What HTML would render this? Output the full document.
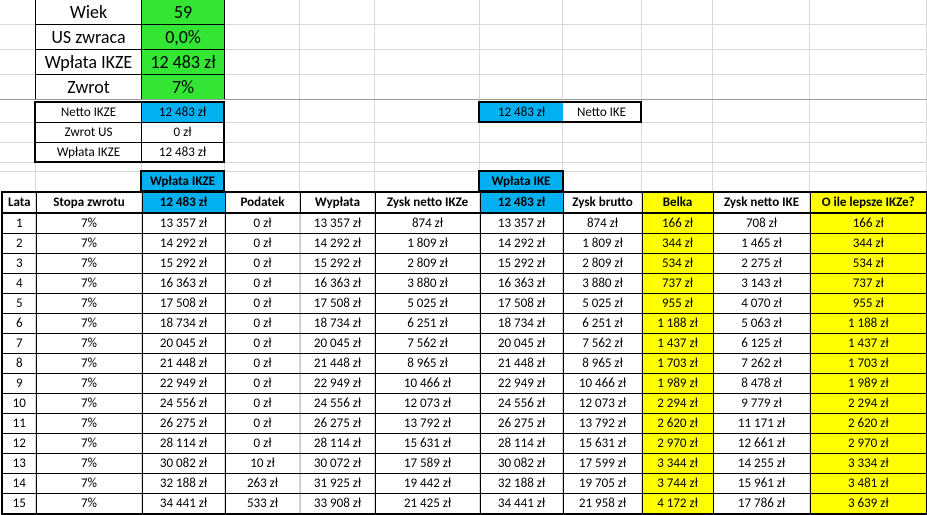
<!DOCTYPE html>
<html><head><meta charset="utf-8"><style>
*{margin:0;padding:0}
body{width:927px;height:514px;background:#fff;position:relative;overflow:hidden;font-family:Calibri,"Liberation Sans",sans-serif;color:#000}
.v{position:absolute;top:0;height:514px;width:1px;background:#d9d9d9}
.h{position:absolute;left:0;width:927px;height:1px;background:#d9d9d9}
.c{position:absolute;display:flex;align-items:center;justify-content:center;box-sizing:border-box;white-space:nowrap}
.big{font-size:18px}
.sm{font-size:13px}
table{position:absolute;left:1px;top:191px;border-collapse:collapse;table-layout:fixed;width:925px;font-size:13px;border:2px solid #000}
td{border:1px solid #000;height:19px;padding:0;text-align:center;white-space:nowrap;overflow:hidden;line-height:19px}
tr.hd td{font-weight:bold;border-bottom:2px solid #000}
td.b{background:#00b0f0}td.y{background:#ffff00}
td.g{border-left-color:#c8c8c8;border-right-color:#c8c8c8}
</style></head><body>
<div class="v" style="left:35px"></div><div class="v" style="left:141px"></div><div class="v" style="left:224px"></div><div class="v" style="left:299px"></div><div class="v" style="left:374px"></div><div class="v" style="left:479px"></div><div class="v" style="left:562px"></div><div class="v" style="left:641px"></div><div class="v" style="left:712px"></div><div class="v" style="left:809px"></div><div class="v" style="left:926px"></div>
<div class="h" style="top:24px"></div><div class="h" style="top:49px"></div><div class="h" style="top:74px"></div><div class="h" style="top:122px"></div><div class="h" style="top:142px"></div><div class="h" style="top:162px"></div><div class="h" style="top:171px"></div>
<div class="h" style="top:99px;background:#9a9a9a"></div>

<div class="c big" style="left:35px;top:0;width:107px;height:25px;border:1px solid #000;border-top:none">Wiek</div>
<div class="c big" style="left:35px;top:24px;width:107px;height:26px;border:1px solid #000">US zwraca</div>
<div class="c big" style="left:35px;top:49px;width:107px;height:26px;border:1px solid #000">Wpłata IKZE</div>
<div class="c big" style="left:35px;top:74px;width:107px;height:25px;border:1px solid #000;border-bottom:none">Zwrot</div>
<div class="c big" style="left:141px;top:0;width:84px;height:25px;background:#33e633;border:1px solid #000;border-top:none">59</div>
<div class="c big" style="left:141px;top:24px;width:84px;height:26px;background:#33e633;border:1px solid #000">0,0%</div>
<div class="c big" style="left:141px;top:49px;width:84px;height:26px;background:#33e633;border:1px solid #000">12 483 zł</div>
<div class="c big" style="left:141px;top:74px;width:84px;height:25px;background:#33e633;border:1px solid #000;border-bottom:none">7%</div>

<div class="c" style="left:34px;top:101px;width:191px;height:62px;border:2px solid #000"></div>
<div class="c sm" style="left:36px;top:103px;width:105px;height:19px">Netto IKZE</div>
<div class="c sm" style="left:141px;top:103px;width:82px;height:19px;background:#00b0f0;border-left:1px solid #000">12 483 zł</div>
<div class="c sm" style="left:36px;top:122px;width:187px;height:1px;background:#000"></div>
<div class="c sm" style="left:36px;top:123px;width:105px;height:19px">Zwrot US</div>
<div class="c sm" style="left:141px;top:123px;width:82px;height:19px;border-left:1px solid #000">0 zł</div>
<div class="c sm" style="left:36px;top:142px;width:187px;height:1px;background:#000"></div>
<div class="c sm" style="left:36px;top:143px;width:105px;height:18px">Wpłata IKZE</div>
<div class="c sm" style="left:141px;top:143px;width:82px;height:18px;border-left:1px solid #000">12 483 zł</div>

<div class="c sm" style="left:478px;top:101px;width:86px;height:22px;background:#00b0f0;border:2px solid #000;border-right:1px solid #000">12 483 zł</div>
<div class="c sm" style="left:563px;top:101px;width:79px;height:22px;background:#fff;border:2px solid #000;border-left:none">Netto IKE</div>

<div class="c sm" style="left:140px;top:170px;width:85px;height:22px;background:#00b0f0;border:2px solid #000;font-weight:bold">Wpłata IKZE</div>
<div class="c sm" style="left:478px;top:170px;width:86px;height:22px;background:#00b0f0;border:2px solid #000;font-weight:bold">Wpłata IKE</div>

<table>
<colgroup><col style="width:34px"><col style="width:106px"><col style="width:83px"><col style="width:75px"><col style="width:75px"><col style="width:105px"><col style="width:83px"><col style="width:79px"><col style="width:71px"><col style="width:97px"><col style="width:117px"></colgroup>
<tr class="hd"><td>Lata</td><td>Stopa zwrotu</td><td class="b">12 483 zł</td><td>Podatek</td><td>Wypłata</td><td>Zysk netto IKZe</td><td class="b">12 483 zł</td><td>Zysk brutto</td><td class="y">Belka</td><td>Zysk netto IKE</td><td class="y">O ile lepsze IKZe?</td></tr>
<tr><td>1</td><td>7%</td><td>13 357 zł</td><td class="g">0 zł</td><td>13 357 zł</td><td>874 zł</td><td>13 357 zł</td><td>874 zł</td><td class="y">166 zł</td><td>708 zł</td><td class="y">166 zł</td></tr>
<tr><td>2</td><td>7%</td><td>14 292 zł</td><td class="g">0 zł</td><td>14 292 zł</td><td>1 809 zł</td><td>14 292 zł</td><td>1 809 zł</td><td class="y">344 zł</td><td>1 465 zł</td><td class="y">344 zł</td></tr>
<tr><td>3</td><td>7%</td><td>15 292 zł</td><td class="g">0 zł</td><td>15 292 zł</td><td>2 809 zł</td><td>15 292 zł</td><td>2 809 zł</td><td class="y">534 zł</td><td>2 275 zł</td><td class="y">534 zł</td></tr>
<tr><td>4</td><td>7%</td><td>16 363 zł</td><td class="g">0 zł</td><td>16 363 zł</td><td>3 880 zł</td><td>16 363 zł</td><td>3 880 zł</td><td class="y">737 zł</td><td>3 143 zł</td><td class="y">737 zł</td></tr>
<tr><td>5</td><td>7%</td><td>17 508 zł</td><td class="g">0 zł</td><td>17 508 zł</td><td>5 025 zł</td><td>17 508 zł</td><td>5 025 zł</td><td class="y">955 zł</td><td>4 070 zł</td><td class="y">955 zł</td></tr>
<tr><td>6</td><td>7%</td><td>18 734 zł</td><td class="g">0 zł</td><td>18 734 zł</td><td>6 251 zł</td><td>18 734 zł</td><td>6 251 zł</td><td class="y">1 188 zł</td><td>5 063 zł</td><td class="y">1 188 zł</td></tr>
<tr><td>7</td><td>7%</td><td>20 045 zł</td><td class="g">0 zł</td><td>20 045 zł</td><td>7 562 zł</td><td>20 045 zł</td><td>7 562 zł</td><td class="y">1 437 zł</td><td>6 125 zł</td><td class="y">1 437 zł</td></tr>
<tr><td>8</td><td>7%</td><td>21 448 zł</td><td class="g">0 zł</td><td>21 448 zł</td><td>8 965 zł</td><td>21 448 zł</td><td>8 965 zł</td><td class="y">1 703 zł</td><td>7 262 zł</td><td class="y">1 703 zł</td></tr>
<tr><td>9</td><td>7%</td><td>22 949 zł</td><td class="g">0 zł</td><td>22 949 zł</td><td>10 466 zł</td><td>22 949 zł</td><td>10 466 zł</td><td class="y">1 989 zł</td><td>8 478 zł</td><td class="y">1 989 zł</td></tr>
<tr><td>10</td><td>7%</td><td>24 556 zł</td><td class="g">0 zł</td><td>24 556 zł</td><td>12 073 zł</td><td>24 556 zł</td><td>12 073 zł</td><td class="y">2 294 zł</td><td>9 779 zł</td><td class="y">2 294 zł</td></tr>
<tr><td>11</td><td>7%</td><td>26 275 zł</td><td class="g">0 zł</td><td>26 275 zł</td><td>13 792 zł</td><td>26 275 zł</td><td>13 792 zł</td><td class="y">2 620 zł</td><td>11 171 zł</td><td class="y">2 620 zł</td></tr>
<tr><td>12</td><td>7%</td><td>28 114 zł</td><td class="g">0 zł</td><td>28 114 zł</td><td>15 631 zł</td><td>28 114 zł</td><td>15 631 zł</td><td class="y">2 970 zł</td><td>12 661 zł</td><td class="y">2 970 zł</td></tr>
<tr><td>13</td><td>7%</td><td>30 082 zł</td><td class="g">10 zł</td><td>30 072 zł</td><td>17 589 zł</td><td>30 082 zł</td><td>17 599 zł</td><td class="y">3 344 zł</td><td>14 255 zł</td><td class="y">3 334 zł</td></tr>
<tr><td>14</td><td>7%</td><td>32 188 zł</td><td class="g">263 zł</td><td>31 925 zł</td><td>19 442 zł</td><td>32 188 zł</td><td>19 705 zł</td><td class="y">3 744 zł</td><td>15 961 zł</td><td class="y">3 481 zł</td></tr>
<tr><td>15</td><td>7%</td><td>34 441 zł</td><td class="g">533 zł</td><td>33 908 zł</td><td>21 425 zł</td><td>34 441 zł</td><td>21 958 zł</td><td class="y">4 172 zł</td><td>17 786 zł</td><td class="y">3 639 zł</td></tr>
</table>
</body></html>
